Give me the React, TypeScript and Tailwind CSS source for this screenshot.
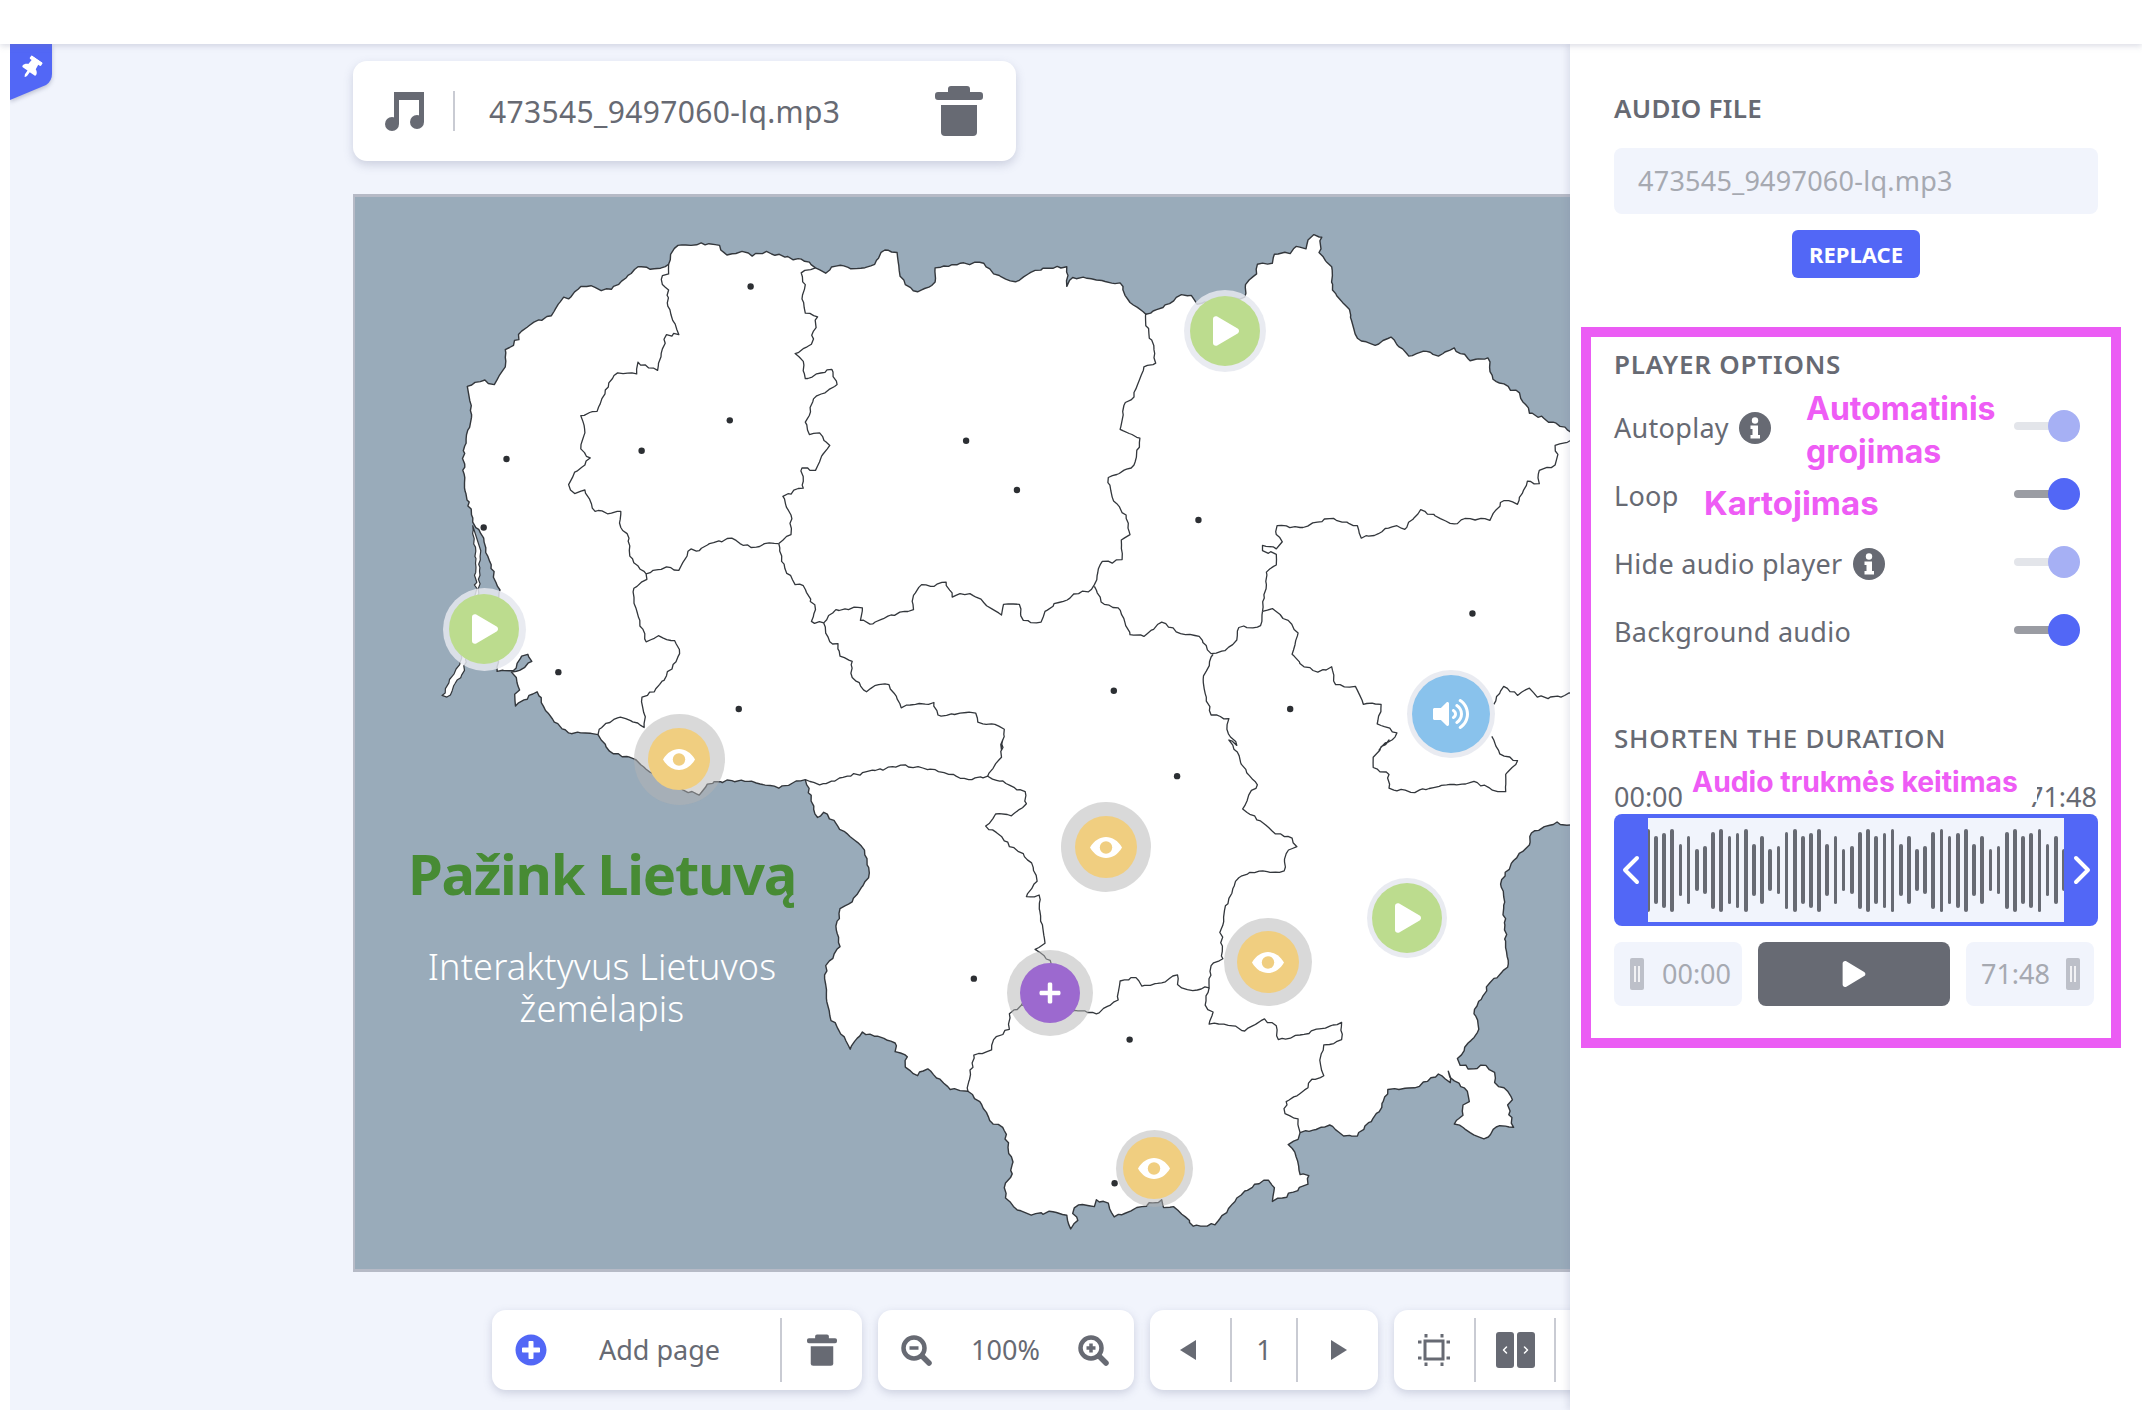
import { ReactNode } from 'react'
import { FaPlay, FaPlus, FaPlusCircle, FaThumbtack, FaVolumeUp } from 'react-icons/fa'
import { ChevronLeft, ChevronRight } from 'lucide-react'

type Pt = [number, number]

// outlines were traced off crops of the map, each crop has its own scale
const z5 = (p: Pt[]) => p.map(([x, y]): Pt => [340 + x / 2.45, 190 + y / 2.8])
const z6 = (p: Pt[]) => p.map(([x, y]): Pt => [960 + x / 2.529, 190 + y / 2.8])
const z7 = (p: Pt[]) => p.map(([x, y]): Pt => [340 + x / 2.45, 740 + y / 2.904])
const z8 = (p: Pt[]) => p.map(([x, y]): Pt => [960 + x / 2.529, 740 + y / 2.904])

// small pseudo random wobble so borders look hand digitised
function rough(pts: Pt[], closed = false) {
  let seed = 7
  const next = () => {
    seed = (seed * 9301 + 49297) % 233280
    return seed / 233280 - 0.5
  }
  let d = ''
  pts.forEach((p, i) => {
    d += `${i ? 'L' : 'M'}${p[0].toFixed(1)} ${p[1].toFixed(1)}`
    const q = pts[i + 1]
    if (!q) return
    const len = Math.hypot(q[0] - p[0], q[1] - p[1])
    const steps = Math.floor(len / 4)
    for (let s = 1; s < steps; s++) {
      const t = s / steps
      d += `L${(p[0] + (q[0] - p[0]) * t + next() * 3).toFixed(1)} ${(p[1] + (q[1] - p[1]) * t + next() * 3).toFixed(1)}`
    }
  })
  return closed ? d + 'Z' : d
}

const land: Pt[] = [
  ...z5([[312,550],[355,532],[378,545],[390,520],[405,495],[405,447],[425,435],[445,395],[475,370],[518,352],[548,300],[560,305],[590,270],[615,268],[640,282],[665,278],[690,255],[730,215],[760,222],[805,208],[810,180],[828,155],[860,155],[885,148],[930,155],[948,182],[985,172],[1010,185],[1045,172],[1090,188],[1150,202],[1165,218],[1190,233],[1215,213],[1265,220],[1310,208],[1335,168],[1365,175],[1370,225],[1385,265],[1415,285],[1458,258],[1458,218],[1520,205]]),
  ...z6([[60,205],[85,235],[140,257],[190,225],[270,215],[270,270],[285,245],[345,252],[405,260],[430,315],[470,348],[530,318],[560,293],[585,295],[600,320],[720,300],[722,265],[750,235],[752,208],[790,205],[795,180],[835,178],[850,158],[875,165],[880,140],[895,125],[915,132],[908,175],[940,215],[942,280],[985,335],[1005,415],[1050,435],[1090,412],[1135,465],[1180,452],[1210,465],[1250,442],[1290,478],[1335,470],[1348,530],[1415,568],[1440,625],[1500,650],[1568,690]]),
  [1660, 440],
  [1660, 835],
  ...z8([[1568,258],[1510,238],[1445,270],[1440,305],[1400,350],[1370,405],[1375,480],[1385,660],[1340,705],[1300,795],[1312,840],[1285,880],[1258,925],[1265,945],[1300,955],[1330,945],[1352,965],[1352,995],[1385,1020],[1397,1045],[1385,1060],[1400,1125],[1365,1120],[1325,1158],[1290,1140],[1250,1115],[1272,1090],[1272,1060],[1288,1050],[1275,1010],[1250,990],[1235,962],[1240,995],[1210,970],[1150,1010],[1110,1015],[1082,1015],[1060,1080],[1005,1150],[970,1150],[935,1118],[860,1140],[855,1160],[830,1175],[850,1210],[860,1262],[882,1265],[880,1290],[815,1330],[790,1340],[795,1300],[780,1278],[745,1290],[700,1330],[645,1408],[590,1412],[570,1385],[540,1355],[515,1358],[510,1335],[460,1355],[390,1385],[375,1345],[345,1335],[340,1355],[300,1350],[285,1375],[298,1395],[280,1420],[270,1380],[235,1370],[180,1380],[145,1365],[115,1330],[112,1300],[132,1260],[130,1210],[108,1125],[75,1105],[50,1050],[20,1020],[0,1018]]),
  ...z7([[1495,1015],[1470,985],[1440,955],[1415,975],[1385,950],[1390,920],[1360,905],[1360,880],[1280,848],[1250,898],[1200,800],[1190,710],[1190,655],[1225,600],[1215,540],[1225,490],[1255,470],[1295,400],[1285,320],[1235,265],[1185,210],[1170,225],[1140,115],[1075,140],[1020,125],[960,118],[900,128],[880,160],[840,145],[750,85],[720,55],[670,40],[640,0]]),
  ...z5([[632,1525],[590,1520],[560,1520],[525,1490],[510,1465],[483,1405],[430,1445],[428,1412],[440,1400],[432,1365],[420,1350],[440,1345],[470,1320],[460,1300],[445,1305],[425,1345],[385,1348],[392,1120],[370,1060],[352,975],[325,930],[305,820],[302,730],[320,650],[318,590]]),
]

const spit = z5([[325,940],[332,1000],[332,1130],[295,1320],[250,1415],[262,1420],[305,1345],[340,1130],[345,1010]])

const borders: Pt[][] = [
  z5([[805,208],[805,235],[790,240],[790,265],[805,280],[803,325],[815,365],[830,405],[800,405],[790,445],[778,505],[730,482],[727,515],[680,512],[650,560],[630,620],[590,632],[600,680],[590,725],[613,750],[600,770],[575,790],[560,825],[575,850],[600,840],[625,900],[665,905],[688,900],[688,945],[708,975],[710,1025],[750,1075],[752,1090],[720,1115],[725,1170],[750,1265],[780,1248],[820,1262],[832,1298],[800,1360],[770,1405],[740,1420],[748,1475],[745,1505],[700,1480],[680,1478],[635,1510],[632,1525]]),
  z5([[1165,218],[1130,232],[1140,265],[1132,305],[1140,345],[1170,355],[1160,395],[1155,432],[1115,458],[1135,480],[1140,528],[1205,502],[1218,545],[1160,585],[1140,650],[1150,685],[1175,680],[1200,715],[1180,745],[1165,785],[1132,778],[1135,835],[1085,858],[1105,910],[1105,965],[1075,990]]),
  z5([[750,1075],[800,1055],[830,1065],[860,1005],[880,1010],[905,990],[960,975],[980,990],[1020,1000],[1040,990],[1075,990]]),
  [...z5([[1075,990],[1090,1060],[1115,1105],[1135,1108],[1165,1175],[1155,1208],[1185,1212],[1200,1265],[1220,1270],[1225,1305],[1255,1320],[1255,1365],[1290,1405],[1310,1388],[1345,1385],[1365,1425],[1375,1450],[1410,1440],[1455,1435],[1465,1470]]), ...z6([[0,1465],[40,1465],[45,1490],[80,1495],[112,1510],[105,1568]]), ...z8([[108,0],[105,50],[70,105]])],
  [...z7([[1140,115],[1175,130],[1280,95],[1385,72],[1480,95],[1540,115]]), ...z8([[30,115],[70,105],[165,150],[168,185],[130,220],[90,215],[65,250],[105,280],[125,310],[160,330],[185,370],[195,410],[168,455],[200,450],[210,550],[215,590],[190,608],[228,640],[228,700],[155,770],[125,795],[125,840],[85,870],[80,900],[35,915],[20,1020]])],
  [...z8([[155,770],[290,785],[345,795],[400,755],[405,700],[445,690],[460,715],[510,705],[550,682],[550,710],[575,725],[630,720],[635,655],[665,635],[660,550],[680,460],[705,400],[745,385],[820,380],[825,330],[852,310],[840,285],[790,265],[760,235],[715,200],[730,160],[752,130],[725,95],[690,15],[680,0]]), ...z6([[700,1555],[675,1510],[680,1480],[635,1470],[620,1410],[615,1370],[640,1300]])],
  z6([[340,1110],[365,1160],[400,1170],[430,1245],[465,1250],[510,1210],[570,1245],[605,1250],[635,1298],[670,1290],[700,1260],[705,1225],[760,1220],[765,1180]]),
  [...z5([[1185,1212],[1215,1175],[1280,1170],[1275,1205],[1305,1215],[1350,1190],[1405,1175],[1405,1135],[1425,1105],[1455,1110],[1485,1098],[1500,1140]]), ...z6([[0,1130],[25,1130],[60,1155],[105,1190],[110,1160],[150,1160],[160,1205],[205,1210],[215,1180],[250,1155],[300,1130],[325,1125],[340,1105],[360,1040],[385,1045],[410,1035],[408,980],[430,965],[420,910],[385,860],[375,805],[440,770],[455,695],[405,670],[418,595],[440,580],[465,495],[495,485],[490,435],[470,380],[470,345]])],
  z6([[765,1180],[775,1105],[775,1070],[800,1050],[800,1020],[765,1010],[765,995],[800,1005],[815,985],[800,965],[802,940],[860,945],[935,920],[1005,940],[1015,975],[1105,940],[1125,950],[1165,895],[1215,920],[1250,935],[1290,920],[1340,925],[1375,870],[1410,880],[1435,815],[1465,822],[1465,785],[1505,770],[1512,740],[1505,715],[1568,690]]),
  [...z6([[765,1180],[790,1172],[830,1205],[855,1240],[840,1300],[870,1335],[905,1350],[940,1335],[950,1385],[1000,1390],[1020,1440],[1065,1440],[1055,1495],[1105,1520],[1060,1568]]), ...z8([[1085,0],[1045,50],[1045,80],[1085,100],[1085,140],[1140,152],[1300,120],[1360,150],[1380,150],[1380,100],[1410,60],[1365,40],[1350,0]]), ...z6([[1345,1530]])],
  z6([[1350,1440],[1375,1390],[1410,1415],[1440,1395],[1460,1420],[1520,1420],[1568,1395]]),
  z8([[630,720],[620,770],[640,790],[630,825],[690,830],[720,845],[770,810],[800,830],[805,870],[870,855],[965,820],[965,870],[920,885],[910,930],[920,975],[890,985],[880,1010],[825,1050],[822,1085],[855,1100],[860,1140]]),
]

const dots: Pt[] = [
  ...z5([[1006,270],[955,645],[739,730],[408,753],[352,945],[535,1350],[977,1453],[1534,702]]),
  ...z6([[144,840],[603,924],[1296,1186],[389,1402],[835,1453]]),
  ...z8([[549,105],[35,693],[429,870],[391,1287]]),
]

type Marker = { x: number; y: number; ring: number; kind: 'play' | 'eye' | 'plus' | 'sound' }

const markers: Marker[] = [
  { x: 1225, y: 331, ring: 82, kind: 'play' },
  { x: 484, y: 629, ring: 83, kind: 'play' },
  { x: 1407, y: 918, ring: 80, kind: 'play' },
  { x: 1451, y: 714, ring: 88, kind: 'sound' },
  { x: 679, y: 759, ring: 91, kind: 'eye' },
  { x: 1106, y: 847, ring: 90, kind: 'eye' },
  { x: 1268, y: 962, ring: 88, kind: 'eye' },
  { x: 1154, y: 1168, ring: 77, kind: 'eye' },
  { x: 1050, y: 993, ring: 86, kind: 'plus' },
]

function EyeIcon() {
  return (
    <svg viewBox="0 0 32 21" className="w-8 h-[21px]">
      <path d="M0 10.500C4 3.500 10 0 16 0s12 3.500 16 10.500C28 17.500 22 21 16 21S4 17.500 0 10.500z" fill="#fff" />
      <circle cx="16" cy="10.500" r="6.200" fill="#f0ce80" />
    </svg>
  )
}

function TrashIcon({ className }: { className: string }) {
  return (
    <svg viewBox="0 0 48 50" className={className} fill="currentColor">
      <path d="M13 6V3a3 3 0 0 1 3-3h16a3 3 0 0 1 3 3v3h10a3 3 0 0 1 3 3v2a3 3 0 0 1-3 3H3a3 3 0 0 1-3-3V9a3 3 0 0 1 3-3z" />
      <path d="M6 19h36v27a4 4 0 0 1-4 4H10a4 4 0 0 1-4-4z" />
    </svg>
  )
}

function InfoDot() {
  return (
    <svg viewBox="0 0 32 32" className="w-8 h-8 shrink-0">
      <circle cx="16" cy="16" r="16" fill="#676a73" />
      <circle cx="16" cy="8.500" r="3.200" fill="#fff" />
      <path d="M11.500 13.500H19V23h2v3.500H11.500V23h2v-6h-2z" fill="#fff" />
    </svg>
  )
}

function MapMarker({ m }: { m: Marker }) {
  const grey = m.kind === 'eye' || m.kind === 'plus'
  return (
    <div
      className={`absolute flex items-center justify-center rounded-full ${grey ? 'bg-[#b4b4b4]/50' : 'bg-[#e5e7ef]/85'}`}
      style={{ left: m.x - 355 - m.ring / 2, top: m.y - 197 - m.ring / 2, width: m.ring, height: m.ring }}
    >
      {m.kind === 'play' && (
        <div className="w-[70px] h-[70px] rounded-full bg-[#bcdc8e] flex items-center justify-center text-white">
          <FaPlay className="w-[26px] h-[30px] ml-[2px]" />
        </div>
      )}
      {m.kind === 'sound' && (
        <div className="w-[78px] h-[78px] rounded-full bg-[#89c2ec] flex items-center justify-center text-white">
          <FaVolumeUp className="w-[36px] h-[36px]" />
        </div>
      )}
      {m.kind === 'eye' && (
        <div className="w-[62px] h-[62px] rounded-full bg-[#f0ce80] flex items-center justify-center">
          <EyeIcon />
        </div>
      )}
      {m.kind === 'plus' && (
        <div className="w-[60px] h-[60px] rounded-full bg-[#9c69cf] flex items-center justify-center text-white">
          <FaPlus className="w-[24px] h-[24px]" />
        </div>
      )}
    </div>
  )
}

function Magnifier({ plus }: { plus?: boolean }) {
  return (
    <svg viewBox="0 0 32 32" className="w-8 h-8 text-[#676a73]" fill="none" stroke="currentColor">
      <circle cx="14" cy="14" r="10.500" strokeWidth="4.500" />
      <path d="M22 22l7 7" strokeWidth="5.500" strokeLinecap="round" />
      <path d="M9.500 14h9" strokeWidth="3.500" />
      {plus && <path d="M14 9.500v9" strokeWidth="3.500" />}
    </svg>
  )
}

function Toolbox({ children, className }: { children: ReactNode; className: string }) {
  return (
    <div className={`h-20 shrink-0 bg-white rounded-[14px] shadow-[0_3px_8px_rgba(120,125,160,0.3)] flex items-center text-[#676a73] ${className}`}>
      {children}
    </div>
  )
}

function Divider() {
  return <div className="w-[2px] h-16 bg-[#c9cbd3] shrink-0" />
}

function Toggle({ on }: { on?: boolean }) {
  return (
    <div className="relative w-[66px] h-8 flex items-center shrink-0 -mt-1">
      <div className={`w-[46px] h-2 rounded-full ${on ? 'bg-[#9a9ca3]' : 'bg-[#e3e5ea]'}`} />
      <div className={`absolute right-0 top-0 w-8 h-8 rounded-full ${on ? 'bg-[#5267f6]' : 'bg-[#a6b0f4]'}`} />
    </div>
  )
}

function OptionRow({ label, info, on }: { label: string; info?: boolean; on?: boolean }) {
  return (
    <div className="h-[68px] flex items-center justify-between pr-[31px]">
      <div className="flex items-center gap-[10px]">
        <span className="text-[27px] tracking-[0.3px] text-[#676a73]">{label}</span>
        {info && <InfoDot />}
      </div>
      <Toggle on={on} />
    </div>
  )
}

const barPattern = [83, 68, 75, 83, 52, 68, 42, 48, 77]
const bars = Array.from({ length: 52 }, (_, i) => barPattern[i % 9])

function Handle() {
  return (
    <div className="w-[14px] h-8 rounded-[2px] bg-[#bdc0c9] flex items-center justify-center gap-[2px] shrink-0">
      <div className="w-[2px] h-4 bg-white/80" />
      <div className="w-[2px] h-4 bg-white/80" />
    </div>
  )
}

export default function App() {
  return (
    <div className="h-screen w-full overflow-hidden flex flex-col bg-white font-['Noto_Sans',sans-serif]">
      <header className="h-11 shrink-0 bg-white relative z-30 shadow-[0_2px_6px_rgba(110,115,150,0.25)]" />

      <div className="flex-1 flex min-h-0">
        <div className="w-[10px] shrink-0 bg-white" />

        <main className="flex-1 min-w-0 relative overflow-hidden bg-[#f1f4fc] pl-[343px] pt-[17px]">
          {/* pin tab */}
          <div className="absolute left-0 top-0 w-[42px] h-[56px] flex justify-center pt-[13px] text-white">
            <svg viewBox="0 0 42 56" className="absolute inset-0 w-[42px] h-[56px] drop-shadow-[0_2px_2px_rgba(90,95,130,0.35)]">
              <path d="M0 0H42V30Q42 37 36 41L0 56Z" fill="#5267f6" />
            </svg>
            <FaThumbtack className="relative w-[22px] h-[22px] rotate-[35deg]" />
          </div>

          {/* audio file card */}
          <div className="w-[663px] h-[100px] bg-white rounded-[14px] shadow-[0_4px_10px_rgba(120,125,160,0.3)] flex items-center pl-[32px] pr-[33px] text-[#676a73]">
            <svg viewBox="0 0 39 40" className="w-[39px] h-10 shrink-0" fill="currentColor">
              <path d="M9 1h30v30h-5V9H14v24H9z" />
              <ellipse cx="7" cy="33" rx="7" ry="7" />
              <ellipse cx="32" cy="31" rx="7" ry="7" />
            </svg>
            <div className="w-[2px] h-10 bg-[#c9cbd3] ml-[29px] shrink-0" />
            <span className="ml-[34px] text-[30px] tracking-[0.35px] flex-1">473545_9497060-lq.mp3</span>
            <TrashIcon className="w-[48px] h-[50px] shrink-0" />
          </div>

          {/* slide canvas */}
          <div className="relative mt-[33px] w-[1300px] h-[1078px] bg-[#99abba] border-t-[3px] border-b-[3px] border-l-2 border-[#b6bac6] overflow-hidden">
            <svg viewBox="355 197 1298 1072" className="absolute left-0 top-0 w-[1298px] h-[1072px]">
              <path d={rough(land, true)} fill="#fff" stroke="#33373c" strokeWidth="1.4" strokeLinejoin="round" />
              <path d={rough(spit, true)} fill="#fff" stroke="#33373c" strokeWidth="1.2" strokeLinejoin="round" />
              {borders.map((b, i) => (
                <path key={i} d={rough(b)} fill="none" stroke="#33373c" strokeWidth="1.3" strokeLinejoin="round" />
              ))}
              {dots.map((d, i) => (
                <circle key={i} cx={d[0]} cy={d[1]} r="3.2" fill="#2c2f33" />
              ))}
            </svg>

            {markers.map((m, i) => (
              <MapMarker key={i} m={m} />
            ))}

            <div className="absolute left-0 top-[640px] w-[494px] text-center">
              <h1 className="text-[56px] leading-[72px] font-bold text-[#478b34] tracking-[-1.3px]">Pažink Lietuvą</h1>
              <p className="mt-[37px] text-[36px] leading-[42px] font-light tracking-[0.2px] text-white">
                Interaktyvus Lietuvos
                <br />
                žemėlapis
              </p>
            </div>
          </div>

          {/* bottom toolbar */}
          <div className="flex gap-4 mt-[38px] ml-[139px] w-[1100px]">
            <Toolbox className="w-[370px]">
              <FaPlusCircle className="w-8 h-8 text-[#5267f6] ml-[23px] shrink-0" />
              <span className="ml-[52px] text-[27px] w-[129px] shrink-0">Add page</span>
              <div className="ml-[52px]"><Divider /></div>
              <TrashIcon className="w-[30px] h-8 ml-[25px] shrink-0" />
            </Toolbox>
            <Toolbox className="w-[256px] justify-between pl-[22px] pr-[25px]">
              <Magnifier />
              <span className="text-[27px] ml-[2px]">100%</span>
              <Magnifier plus />
            </Toolbox>
            <Toolbox className="w-[228px]">
              <div className="w-[81px] flex justify-center pr-[4px]">
                <svg viewBox="0 0 16 20" className="w-4 h-5"><path d="M16 0v20L0 10z" fill="currentColor" /></svg>
              </div>
              <Divider />
              <span className="w-[64px] text-center text-[27px]">1</span>
              <Divider />
              <div className="w-[81px] flex justify-center pl-[2px]">
                <svg viewBox="0 0 16 20" className="w-4 h-5"><path d="M0 0v20l16-10z" fill="currentColor" /></svg>
              </div>
            </Toolbox>
            <Toolbox className="w-[220px]">
              <div className="w-[80px] flex justify-center">
                <svg viewBox="0 0 32 32" className="w-8 h-8" fill="none" stroke="currentColor" strokeWidth="3">
                  <rect x="7" y="7" width="18" height="18" />
                  <path d="M8 0v3.500M24 0v3.500M8 28.500V32M24 28.500V32M0 8h3.500M0 24h3.500M28.500 8H32M28.500 24H32" />
                </svg>
              </div>
              <Divider />
              <div className="w-[78px] flex justify-center gap-[3px]">
                <div className="w-[18px] h-[36px] rounded-[3px] bg-[#676a73] flex items-center justify-center text-white"><ChevronLeft className="w-3 h-3" strokeWidth={3} /></div>
                <div className="w-[18px] h-[36px] rounded-[3px] bg-[#676a73] flex items-center justify-center text-white"><ChevronRight className="w-3 h-3" strokeWidth={3} /></div>
              </div>
              <Divider />
            </Toolbox>
          </div>
        </main>

        {/* right panel */}
        <aside className="w-[572px] shrink-0 bg-white relative z-20 shadow-[-3px_0_6px_rgba(110,115,150,0.15)] text-[#676a73]">
          <div className="pt-12 pl-11 pr-11">
            <h2 className="text-[26px] leading-8 font-semibold tracking-[0.3px]">AUDIO FILE</h2>
            <div className="mt-6 h-[66px] rounded-lg bg-[#f1f4fc] flex items-center px-6 text-[27px] tracking-[0.25px] text-[#a6a9b1]">473545_9497060-lq.mp3</div>
            <div className="mt-4 flex justify-center">
              <button className="w-32 h-12 rounded-md bg-[#5267f6] text-white text-[22px] leading-[44px] font-bold">REPLACE</button>
            </div>
          </div>

          {/* pink annotation frame */}
          <div className="relative mt-[49px] ml-[11px] w-[540px] border-[10px] border-[#eb5cf4] pl-[23px] pt-[11px] pb-8">
            <h2 className="text-[26px] leading-8 font-semibold tracking-[0.8px]">PLAYER OPTIONS</h2>
            <div className="mt-[14px]">
              <OptionRow label="Autoplay" info />
              <OptionRow label="Loop" on />
              <OptionRow label="Hide audio player" info />
              <OptionRow label="Background audio" on />
            </div>

            <h2 className="mt-[56px] text-[26px] leading-8 font-medium tracking-[0.8px]">SHORTEN THE DURATION</h2>
            <div className="mt-[27px] pr-[14px] h-8 flex justify-between items-center text-[27px]">
              <span>00:00</span>
              <span>71:48</span>
            </div>

            <div className="mt-[1px] mr-[13px] h-28 rounded-lg bg-[#5267f6] flex items-center text-white">
              <div className="w-[34px] flex justify-center shrink-0"><ChevronLeft className="w-12 h-12 shrink-0" strokeWidth={2} /></div>
              <div className="w-[416px] h-[104px] shrink-0 bg-[#f1f4fc] overflow-hidden flex items-center gap-[4.47px]">
                {bars.map((h, i) => (
                  <div key={i} className={`w-[3.7px] shrink-0 rounded-full bg-[#676a73] ${i === 0 ? '-ml-[2px]' : ''}`} style={{ height: h }} />
                ))}
              </div>
              <div className="w-[34px] flex justify-center shrink-0 pl-[2px]"><ChevronRight className="w-12 h-12 shrink-0" strokeWidth={2} /></div>
            </div>

            <div className="mt-4 flex gap-4 h-16 text-[27px] text-[#a6a9b1]">
              <div className="w-32 rounded-lg bg-[#f1f4fc] flex items-center pl-4 gap-[18px]">
                <Handle />
                <span>00:00</span>
              </div>
              <div className="w-48 rounded-lg bg-[#676a73] flex items-center justify-center text-white">
                <FaPlay className="w-[24px] h-[26px]" />
              </div>
              <div className="w-32 rounded-lg bg-[#f1f4fc] flex items-center justify-end pr-[14px] gap-[16px]">
                <span>71:48</span>
                <Handle />
              </div>
            </div>

            {/* notes written over the screenshot */}
            <div className="absolute left-[215px] top-[50px] text-[32px] leading-[43px] font-bold text-[#ee5cf5] font-['Inter',sans-serif]">
              Automatinis
              <br />
              grojimas
            </div>
            <div className="absolute left-[113px] top-[145px] text-[33px] leading-[42px] font-bold text-[#ee5cf5] font-['Inter',sans-serif]">Kartojimas</div>
            <div className="absolute left-[97px] top-[425px] w-[349px] h-10 pl-1 bg-white text-[28.3px] leading-10 font-bold text-[#ee5cf5] font-['Inter',sans-serif] whitespace-nowrap">Audio trukmės keitimas</div>
          </div>
        </aside>
      </div>
    </div>
  )
}
